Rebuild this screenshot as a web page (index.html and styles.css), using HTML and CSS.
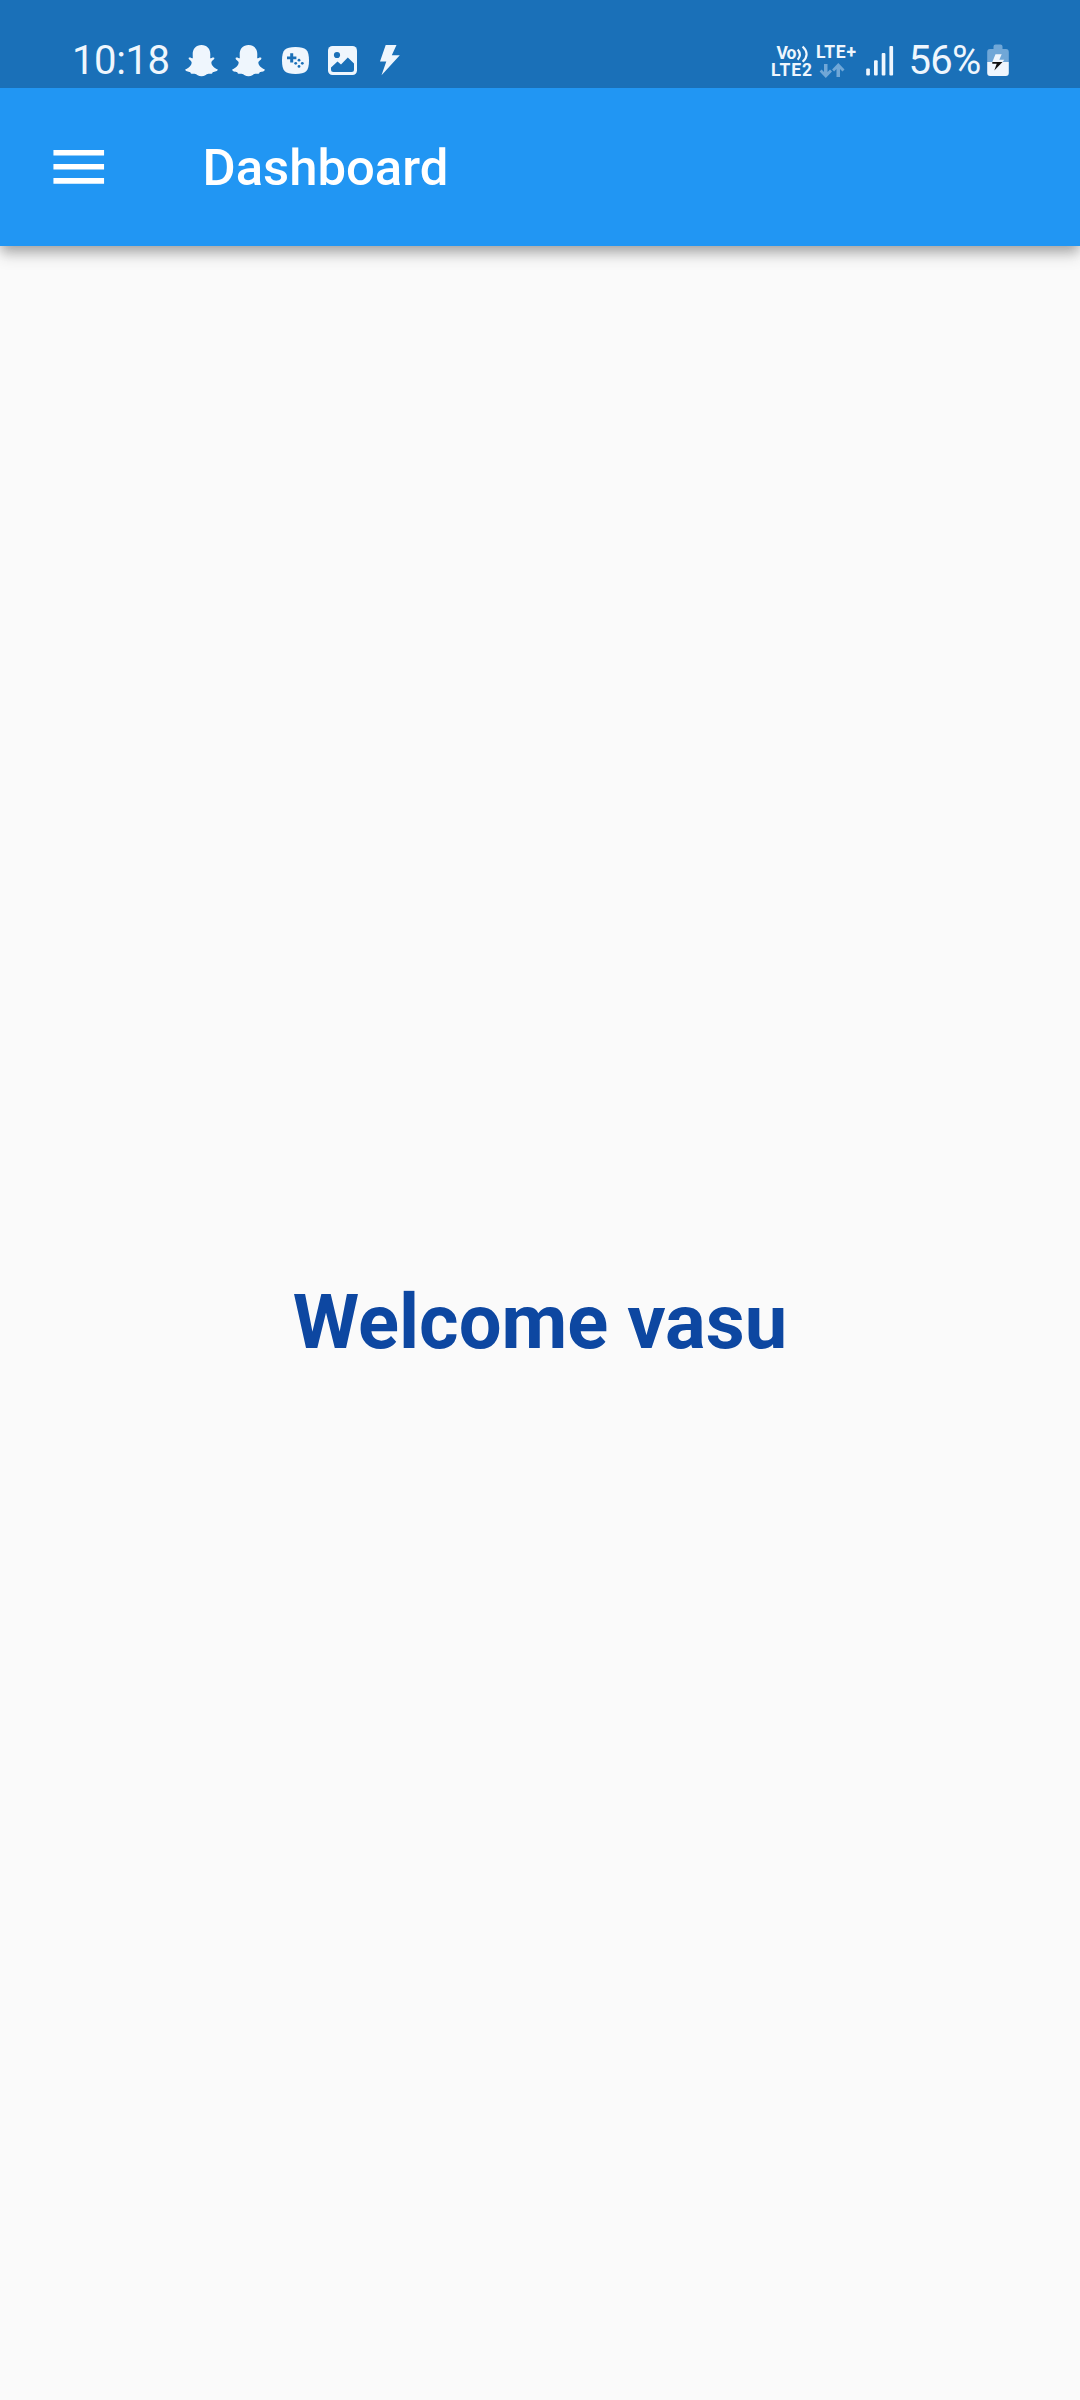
FILE: index.html
```html
<!DOCTYPE html>
<html lang="en">
<head>
<meta charset="utf-8">
<title>Dashboard</title>
<link rel="stylesheet" href="styles.css">
</head>
<body>
<div class="screen">
  <header class="status">
    <div class="group notifications">
      <span class="clock">10:18</span>
      <svg class="icon" width="34" height="88" viewBox="0 0 34 88"><path id="ghost" d="M16.5 45C22 45 25.5 49 25.3 54.5L25.2 58.2C26.3 58.3 28 56.7 29.2 57.8C30.2 59.3 27 60.5 26.4 62C26 65.5 29.5 68 32.8 69.5C33 71.3 29.5 71.6 28 72.1C27.2 72.5 27.6 73.6 26.5 73.8C24.5 73.8 22.8 73.4 20.8 74.9C18 76.7 15 76.7 12.2 74.9C10.2 73.4 8.5 73.8 6.5 73.8C5.4 73.6 5.8 72.5 5 72.1C3.5 71.6 0 71.3 .2 69.5C3.5 68 7 65.5 6.6 62C6 60.5 2.8 59.3 3.8 57.8C5 56.7 6.7 58.3 7.8 58.2L7.7 54.5C7.5 49 11 45 16.5 45Z"/></svg>
      <svg class="icon" width="34" height="88" viewBox="0 0 34 88"><use href="#ghost"/></svg>
      <svg class="icon" width="27" height="88" viewBox="282 0 27 88"><path d="M295.5 47C306 47 309 50 309 60.5S306 74 295.5 74S282 71 282 60.5S285 47 295.5 47Z"/><path class="cut" d="M290.2 53.2h3v3.3h3.2v2.8h-3.2v3.2h-3v-3.2H287v-2.8h3.2Z"/><g class="cut"><circle cx="299" cy="60.2" r="1.4"/><circle cx="295.7" cy="63.3" r="1.4"/><circle cx="302.3" cy="63.3" r="1.4"/><circle cx="299" cy="66.4" r="1.4"/></g></svg>
      <svg class="icon" width="29" height="88" viewBox="328 0 29 88"><rect x="328" y="46" width="29" height="29" rx="4.5"/><circle class="cut" cx="337" cy="55" r="3.1"/><path class="cut" d="M331 67.5L337.5 61.5L341 64.5L347.8 57.5L354 63.5V69.5Q354 72 351.5 72H333.5Q331 72 331 69.5Z"/></svg>
      <svg class="icon" width="20" height="88" viewBox="380 0 20 88"><path d="M385.7 45H396.5L391.8 55.3H399.8L381.5 75.2L386.3 61.5H380Z"/></svg>
    </div>
    <div class="group">
      <svg class="icon network" width="86" height="88" viewBox="771 0 86 88">
        <text x="776.5" y="59" textLength="20">Vo</text>
        <path class="wave" d="M797.7 49.5Q802 54.6 797.7 59.7M802.6 46.5Q810.6 54.2 802.6 61.8"/>
        <text x="771" y="76" textLength="41">LTE2</text>
        <text x="816" y="58" textLength="40">LTE+</text>
        <path class="faded" d="M824 64h3.5v8l2.5-2.5 2 2-6.2 6.5-6.2-6.5 2-2 2.4 2.5ZM836.5 77h3.5v-8l2.5 2.5 2-2-6.2-6.5-6.2 6.5 2 2 2.4-2.5Z"/>
      </svg>
      <svg class="icon signal" width="28" height="88" viewBox="866 0 28 88"><rect x="866.2" y="68.5" width="3.7" height="7" rx="1"/><rect x="874" y="60.3" width="3.7" height="15.2" rx="1"/><rect x="881.7" y="53" width="3.7" height="22.5" rx="1"/><rect x="889.4" y="46" width="3.7" height="29.5" rx="1"/></svg>
      <span class="percent">56%</span>
      <svg class="icon battery" width="22" height="88" viewBox="986.5 0 22 88"><path class="faded" d="M993 49V46.5Q993 44.5 995 44.5H1000Q1002 44.5 1002 46.5V49H1005.5Q1008.3 49 1008.3 52V62H986.7V52Q986.7 49 989.5 49Z"/><path d="M986.7 62H1008.3V73Q1008.3 76 1005.3 76H989.7Q986.7 76 986.7 73Z"/><path d="M995 54.3H1001.2L998.8 59.8H1003.8L1002 62H991.8Z"/><path class="charge" d="M991.8 62H1002L993.8 70.6L996.2 63.7H991.8Z"/></svg>
    </div>
  </header>
  <nav class="appbar">
    <svg class="menu" viewBox="0 0 24 24"><path d="M3 18h18v-2H3v2zm0-5h18v-2H3v2zm0-7v2h18V6H3z"/></svg>
    <h1 class="title">Dashboard</h1>
  </nav>
  <main class="content"><p class="welcome">Welcome vasu</p></main>
</div>
</body>
</html>
```
FILE: styles.css
```css
* { box-sizing: border-box; }
body { margin: 0; font-family: Roboto, sans-serif; background: #fafafa; }
.screen { display: flex; flex-direction: column; width: 1080px; height: 2400px; overflow: hidden; }
.status { position: relative; z-index: 1; display: flex; justify-content: space-between; height: 88px; padding: 0 71.5px 0 71px; background: #1a70b8; color: #eff6fd; flex: none; }
.group { display: flex; }
.icon { display: block; fill: #eff6fd; flex: none; }
.clock, .percent { font-size: 40px; line-height: 47px; padding-top: 37px; white-space: nowrap; }
.clock { width: 101px; margin-right: 13px; padding-left: 1px; letter-spacing: -0.4px; }
.notifications .icon { margin-right: 13px; }
.notifications .icon:nth-child(3) { margin-right: 16px; }
.notifications .icon:nth-child(4) { margin-right: 19px; }
.notifications .icon:nth-child(5) { margin-right: 23px; }
.cut { fill: #1a70b8; }
.network { font-size: 17.5px; font-weight: 700; margin-right: 9px; }
.wave { fill: none; stroke: #eff6fd; stroke-width: 2.2; }
.faded { fill: #70a7d7; }
.signal { margin-right: 14.5px; }
.percent { width: 78px; letter-spacing: -0.7px; }
.charge { fill: #111; }
.appbar { display: flex; align-items: center; height: 157.5px; padding-left: 45px; background: #2196f3; flex: none; box-shadow: 0 6px 11px -2px rgba(0,0,0,.2), 0 11px 14px rgba(0,0,0,.12), 0 3px 14px rgba(0,0,0,.1); }
.menu { width: 67.5px; height: 67.5px; fill: #fff; margin: 0 90px 1px 0; }
.title { margin: 3px 0 0; font-size: 50.8px; font-weight: 500; color: #fff; line-height: 60px; }
.content { flex: 1; display: flex; align-items: center; justify-content: center; }
.welcome { margin: 0; font-size: 75.94px; font-weight: 700; color: #0d47a1; line-height: 90px; }
```
